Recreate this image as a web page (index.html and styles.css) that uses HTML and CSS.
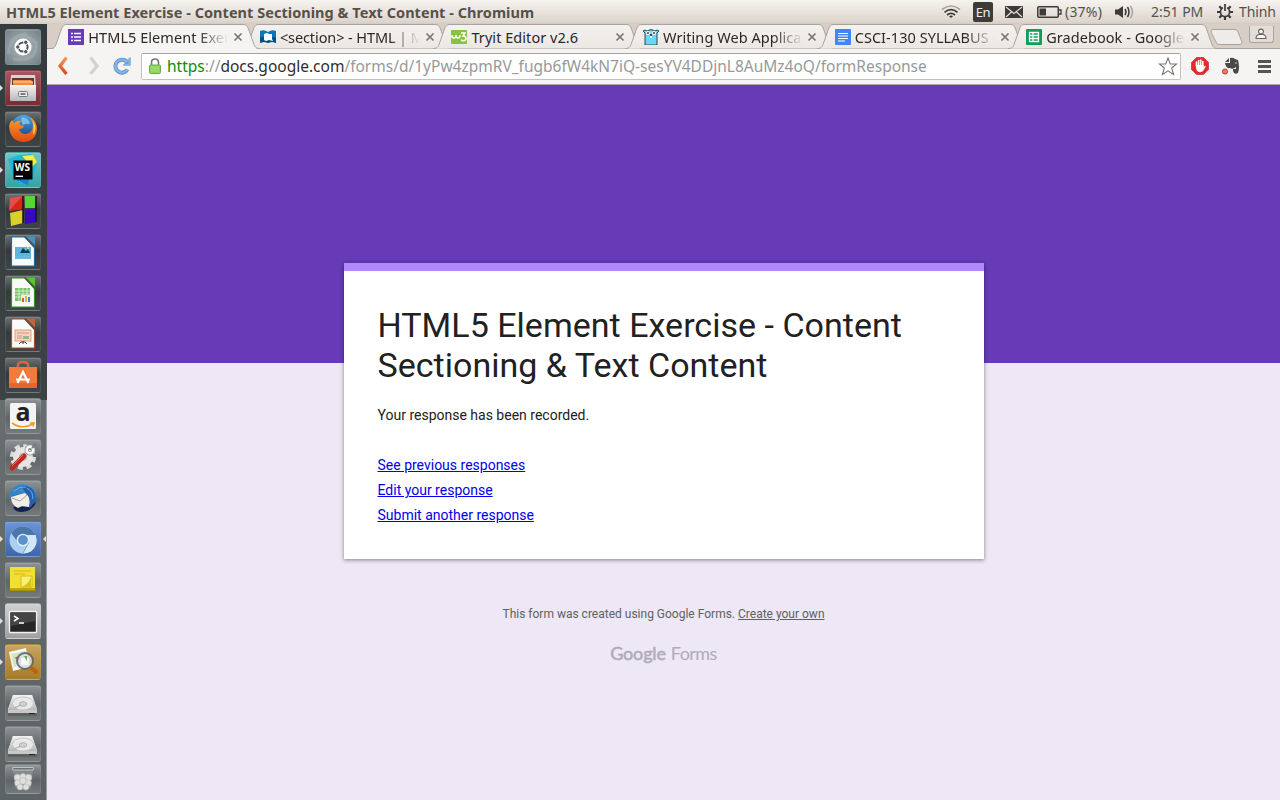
FILE: index.html
```html
<!DOCTYPE html>
<html lang="en">
<head>
<meta charset="utf-8">
<title>HTML5 Element Exercise - Content Sectioning &amp; Text Content</title>
<link rel="stylesheet" href="styles.css">
</head>
<body>
<svg class="defs" width="0" height="0">
  <defs>
    <linearGradient id="orange" x1="0" y1="0" x2="0" y2="1"><stop offset="0" stop-color="#f09a5c"/><stop offset="1" stop-color="#d9481f"/></linearGradient>
    <linearGradient id="fox" x1="0" y1="0" x2="0" y2="1"><stop offset="0" stop-color="#f9a02c"/><stop offset="1" stop-color="#dc4a14"/></linearGradient>
    <linearGradient id="steel" x1="0" y1="0" x2="0" y2="1"><stop offset="0" stop-color="#f4f4f4"/><stop offset="1" stop-color="#b8b8b8"/></linearGradient>
    <linearGradient id="sky" x1="0" y1="0" x2="0" y2="1"><stop offset="0" stop-color="#4fa6df"/><stop offset="1" stop-color="#123a80"/></linearGradient>
    <linearGradient id="tabFill" x1="0" y1="0" x2="0" y2="1"><stop offset="0" stop-color="#f4f2f0"/><stop offset="1" stop-color="#ebe7e3"/></linearGradient>
    <symbol id="tab" viewBox="0 0 212 25"><path d="M0 24.500C4 24.500 5 23 6 20.500L11.500 5C13 1.500 14 .5 17 .5H193C196 .5 197 1.500 198.500 5L204 20.500C205 23 206 24.500 210 24.500"/></symbol>
    <symbol id="close" viewBox="0 0 10 10"><path d="M1.500 1.500L8.500 8.500M8.500 1.500L1.500 8.500" stroke="#77716b" stroke-width="1.600"/></symbol>
    <symbol id="disk" viewBox="0 0 36 36"><path d="M8 10H27L32 24V30H3V24Z" fill="#dcdcdc"/><path d="M8 10H27L32 25H3Z" fill="url(#steel)"/><path d="M3 25H32V31H3Z" fill="#606060"/><path d="M3 25H32V28H3Z" fill="#c8c8c8"/><path d="M24 28.500H30" stroke="#222"/><ellipse cx="18" cy="18.500" rx="10.500" ry="6.500" fill="#e9e9e9" stroke="#c0c0c0" stroke-width=".8"/><ellipse cx="18" cy="19" rx="3.800" ry="2.300" fill="#d0d0d0" stroke="#a5a5a5" stroke-width=".7"/><path d="M9 23L16 20" stroke="#b0b0b0" stroke-width="1.200"/></symbol>
  </defs>
</svg>

<header class="panel">
  <div class="window-title">HTML5 Element Exercise - Content Sectioning &amp; Text Content - Chromium</div>
  <div class="indicators">
    <svg class="wifi" width="20" height="14" viewBox="0 0 20 14" fill="none" stroke-width="1.700"><path d="M1 4.500Q10-2.500 19 4.500" stroke="#aaa49c"/><path d="M3.500 7.300Q10 2 16.500 7.300M6 10Q10 6.600 14 10" stroke="#3c3b37"/><path d="M8 11.200Q10 9.800 12 11.200L10 13Z" fill="#3c3b37"/></svg>
    <span class="lang">En</span>
    <svg class="mail" width="18" height="12" viewBox="0 0 18 12"><rect width="18" height="12" fill="#3c3b37"/><path d="M1 1L9 7.500L17 1M1 11L6.500 6M17 11L11.500 6" fill="none" stroke="#e6e0da" stroke-width="1.100"/></svg>
    <svg class="battery" width="25" height="12" viewBox="0 0 25 12"><rect x=".8" y=".8" width="20.500" height="10.400" rx="1" fill="none" stroke="#3c3b37" stroke-width="1.500"/><path d="M2.500 2.500H9V9.500H2.500Z" fill="#3c3b37"/><path d="M22 4H24V8H22" fill="none" stroke="#3c3b37" stroke-width="1.300"/></svg>
    <span class="percent">(37%)</span>
    <svg class="sound" width="20" height="14" viewBox="0 0 20 14"><path d="M0 4.500H3L8 1V13L3 9.500H0Z" fill="#3c3b37"/><path d="M10 4Q12 7 10 10M12.500 2Q15.500 7 12.500 12" fill="none" stroke="#3c3b37" stroke-width="1.500"/><path d="M15.500 1Q19.500 7 15.500 13" fill="none" stroke="#aaa49c" stroke-width="1.500"/></svg>
    <span class="clock">2:51 PM</span>
    <svg class="gear" width="16" height="16" viewBox="0 0 16 16" fill="none" stroke="#3c3b37"><circle cx="8" cy="8" r="4.600" stroke-width="1.700"/><path d="M8 13V16M3 8H0M13 8H16M4.500 4.500L2.300 2.300M11.500 4.500L13.700 2.300M4.500 11.500L2.300 13.700M11.500 11.500L13.700 13.700" stroke-width="2.200"/><path d="M8 0V7" stroke="#e8e2dc" stroke-width="4"/><path d="M8 0V7" stroke-width="1.700"/></svg>
    <span class="user">Thinh</span>
  </div>
</header>

<div class="desktop">
  <nav class="launcher">
    <div class="tile dash"><svg viewBox="0 0 36 36"><path d="M3 25Q6 5 22 5M8 30Q34 34 31 12M5 14Q15 0 30 13" stroke="#a8b3b7" stroke-width="3" opacity=".45" fill="none"/><circle cx="18" cy="18" r="8.500" fill="#fff"/><circle cx="18" cy="18" r="4.600" fill="none" stroke="#4d5659" stroke-width="2"/><g fill="#4d5659" stroke="#fff"><circle cx="12.800" cy="18" r="2.200"/><circle cx="20.800" cy="13.300" r="2.200"/><circle cx="20.800" cy="22.700" r="2.200"/></g></svg></div>
    <div class="tile files running"><svg viewBox="0 0 36 36"><path d="M6 5H30L31 18H5Z" fill="#d8d5d1"/><path d="M7 8H29V16H7Z" fill="#5c3928"/><path d="M8 10H26L28 12V16H8Z" fill="#f08a43"/><path d="M8 12H28" stroke="#ffd0a5"/><rect x="5" y="15" width="26" height="16" rx="1" fill="url(#steel)"/><rect x="13.500" y="21.500" width="9" height="5" rx="1" fill="#eee" stroke="#777"/><path d="M15.500 24H20.500" stroke="#555" stroke-width="1.500"/></svg></div>
    <div class="tile dark"><svg viewBox="0 0 36 36"><circle cx="18.500" cy="16.500" r="12.500" fill="url(#sky)"/><path d="M17 6Q24 7 25 13Q21 12 18 14Q15 9 17 6" fill="#78bde8"/><path d="M4 15Q5 11 7 9L9 12Q12 9 16 10Q14 12 15 14L19 15Q18 18 14 18Q15 23 21 23Q28 22 28 14Q27 9 25 6Q32 10 32 19Q30 31 18 31Q5 30 4 15Z" fill="url(#fox)"/><path d="M28 10Q33 17 28 24Q29 17 28 10" fill="#ffd14d"/></svg></div>
    <div class="tile storm running"><svg viewBox="0 0 36 36"><path d="M3 7L14 3L27 2L32 10L28 28L14 33L8 24Z" fill="#20b7d9"/><path d="M17 4L28 3L32 10L27 15Z" fill="#f2ec48"/><path d="M9 27L24 27L23 33Z" fill="#217fd3"/><rect x="8.500" y="8.500" width="19" height="19" fill="#000"/><text x="9.800" y="18.500" class="ws">WS</text><path d="M10.500 24.300H18" stroke="#fff" stroke-width="1.400"/></svg></div>
    <div class="tile dark"><svg viewBox="0 0 36 36"><path d="M5 5L18 3V16L4 18Z" fill="#dd241b"/><path d="M20 3H31L30 15H20Z" fill="#5ad33a"/><path d="M5 20L18 17V30L6 33Z" fill="#d7d128"/><path d="M20 17L31 16V29L20 31Z" fill="#3808c1"/><path d="M5 5L18 3L10 11L4 18Z" fill="#fff" opacity=".2"/><path d="M18 3V30M31 3V29" stroke="#151515" stroke-width="1.500"/></svg></div>
    <div class="tile dark"><svg viewBox="0 0 36 36"><path d="M6.500 3H20L29.500 13V32H6.500Z" fill="#fafafa" stroke="#1d6da2" stroke-width="1.200"/><path d="M20 2.500H30V13Z" fill="#4392c6"/><path d="M18.500 2.500H21L30 11.500V15Z" fill="#3f5561"/><rect x="10" y="13" width="16" height="12" fill="#5bb5df"/><path d="M15 19L18 14L21 17L23 15L25 19Z" fill="#123d4a"/><circle cx="23" cy="14" r="1" fill="#ffe050"/><path d="M10 22H26V25H10Z" fill="#6fb6dc"/></svg></div>
    <div class="tile dark"><svg viewBox="0 0 36 36"><path d="M6.500 3H20L29.500 13V32H6.500Z" fill="#fafafa" stroke="#32941d" stroke-width="1.200"/><path d="M20 2.500H30V13Z" fill="#57c434"/><path d="M18.500 2.500H21L30 11.500V15Z" fill="#42603a"/><path d="M10 13H25V26H10Z" fill="#79c468"/><path d="M10 16H25M10 19H25M10 22H25M14 13V26M18 13V26M22 13V26" stroke="#e5f7df" stroke-width=".8"/><path d="M16 20H26V27H16Z" fill="#eee"/><path d="M18 23V27" stroke="#d85b36" stroke-width="2"/><path d="M21 21V27" stroke="#e9b637" stroke-width="2"/><path d="M24 22V27" stroke="#398ac4" stroke-width="2"/></svg></div>
    <div class="tile dark"><svg viewBox="0 0 36 36"><path d="M6.500 3H20L29.500 13V32H6.500Z" fill="#fafafa" stroke="#a14e25" stroke-width="1.200"/><path d="M20 2.500H30V13Z" fill="#b9673d"/><path d="M18.500 2.500H21L30 11.500V15Z" fill="#604a40"/><rect x="10" y="14" width="16" height="11" fill="#f5d4c5" stroke="#dba083"/><path d="M12 17H24M12 20H17M12 22H17" stroke="#dc926e"/><path d="M18 20H24V23H18Z" fill="#8cba90"/><path d="M18 25V28M14 28L16 26H20L22 28" stroke="#4b3b35" fill="none"/></svg></div>
    <div class="tile dark"><svg viewBox="0 0 36 36"><path d="M13 12V8Q13 5 18 5Q23 5 23 8V12" fill="none" stroke="#cf654a" stroke-width="2.600"/><path d="M4 10H32V31H4Z" fill="#f17a3d"/><path d="M4 26H32V31H4Z" fill="#e4662c"/><path d="M12.500 26L18 15L23.500 26M11 22.500H25" fill="none" stroke="#fff" stroke-width="2.200"/></svg></div>
    <div class="tile pale"><svg viewBox="0 0 36 36"><rect x="5" y="5" width="26" height="26" rx="1.500" fill="#f4f4f4"/><text x="10.500" y="23" class="amazon">a</text><path d="M7 25Q17 32 28 26M25 25H29L28 28.500" fill="none" stroke="#f79a1c" stroke-width="1.600"/></svg></div>
    <div class="tile pale"><svg viewBox="0 0 36 36"><circle cx="18" cy="18" r="11" fill="none" stroke="#dcdcdc" stroke-width="4" stroke-dasharray="5 3.640"/><circle cx="18" cy="18" r="10" fill="#e5e5e5"/><circle cx="18" cy="18" r="4" fill="#bcbcbc"/><path d="M15 20L23 13" stroke="#cfcfcf" stroke-width="4"/><circle cx="25" cy="11" r="3.400" fill="none" stroke="#8c8c8c" stroke-width="4"/><circle cx="25" cy="11" r="3.400" fill="none" stroke="#f8f8f8" stroke-width="2.600"/><path d="M27 9L31 5" stroke="#777d7e" stroke-width="2"/><path d="M7 29L19 17" stroke="#bf2920" stroke-width="5" stroke-linecap="round"/><path d="M7 27L18 16" stroke="#ef6f61"/></svg></div>
    <div class="tile pale"><svg viewBox="0 0 36 36"><circle cx="19" cy="17.500" r="13" fill="url(#sky)"/><path d="M8 27Q11 34 22 31Q28 29 31 22L24 27Z" fill="#16204a"/><path d="M6 17L20 13Q27 18 24 27L17 26L13 28Q6 25 6 17Z" fill="#f0ece6"/><path d="M7 18L15 21L22 15" fill="none" stroke="#aaa395"/><path d="M4 20Q4 9 13 5Q22 2 27 10Q18 7 12 12L7 15Z" fill="#3585cc"/><path d="M17 6Q30 5 30 17Q29 26 24 28Q27 16 19 11Z" fill="#285fa9"/><path d="M9 11Q14 6 21 7M22 8Q28 11 28 19" stroke="#68b0e3" fill="none"/></svg></div>
    <div class="tile chromium running focused"><svg viewBox="0 0 36 36"><circle cx="18" cy="19" r="13.500" fill="#a9d0ee"/><path d="M6.300 12.300A13.500 13.500 0 0 1 29.700 12.300L31 14H18L12 20Z" fill="#4a76aa"/><path d="M30.500 14Q34 24 26 30.500Q21 33 17 32L24 20Q24 15 20 14Z" fill="#d2e8f7"/><path d="M18 32L24 21" stroke="#679bc9"/><circle cx="18" cy="19" r="6.300" fill="#e6f2fa"/><circle cx="18" cy="19" r="4.900" fill="#5c91cc"/></svg></div>
    <div class="tile pale"><svg viewBox="0 0 36 36"><path d="M5 5H30V29H5Z" fill="#f4df30"/><path d="M5 26H30V29H5Z" fill="#bda90f"/><path d="M5 28.500H30V30H5Z" fill="#87790b"/><path d="M9 9H26M9 12H20" stroke="#cdb927"/><path d="M16 14H27V25H16Z" fill="#f9ef78" stroke="#d5bd12"/><path d="M16 25Q23 23 26 15V25Z" fill="#dbc218"/></svg></div>
    <div class="tile terminal running"><svg viewBox="0 0 36 36"><rect x="4.500" y="8.500" width="27" height="21" rx="1" fill="#262626" stroke="#f2f2f2" stroke-width="1.400"/><path d="M6 10H30V18L6 23Z" fill="#454545"/><path d="M9 13L13 15.500L9 18M14 20H19" fill="none" stroke="#fff" stroke-width="1.500"/></svg></div>
    <div class="tile viewer running"><svg viewBox="0 0 36 36"><path d="M4 8L21 4L24 23L8 27Z" fill="#f7f7f2"/><path d="M6 10L20 7L21 20L9 23Z" fill="#d5e2c9"/><path d="M9 14L14 12L17 17Z" fill="#cb6c3c"/><circle cx="20" cy="17" r="8" fill="#d6e1e4" opacity=".9" stroke="#60666b" stroke-width="2"/><path d="M16 14H24V21H16Z" fill="#f8f8f8"/><path d="M19 12H22V17Z" fill="#6ea754"/><path d="M26.500 24L31 28" stroke="#b9640d" stroke-width="4" stroke-linecap="round"/></svg></div>
    <div class="tile pale"><svg viewBox="0 0 36 36"><use href="#disk"/></svg></div>
    <div class="tile pale"><svg viewBox="0 0 36 36"><use href="#disk"/></svg></div>
    <div class="tile pale trash"><svg viewBox="0 0 36 30"><path d="M8 4H28L26 24Q18 28 10 24Z" fill="#8b9091" opacity=".7"/><path d="M7.500 3.500H28.500L28 6H8Z" fill="#6c7273" stroke="#bfc3c3"/><g fill="#dfe0dd" stroke="#b4b7b4" stroke-width=".6"><circle cx="12.500" cy="13.500" r="3.300"/><circle cx="18" cy="12.500" r="3"/><circle cx="23.500" cy="13.500" r="3.300"/><circle cx="13" cy="19" r="3.300"/><circle cx="23" cy="19" r="3.300"/><circle cx="18" cy="17" r="3.300"/><circle cx="15" cy="23" r="3"/><circle cx="21" cy="23" r="3"/></g></svg></div>
  </nav>

  <main class="browser">
    <div class="tab-strip">
      <div class="tab active"><svg class="tab-shape" width="212" height="25"><use href="#tab"/></svg><svg class="favicon" viewBox="0 0 16 16"><path d="M0 0H16V16H0Z" fill="#673ab7"/><path d="M3 4.500H5M6 4.500H13M3 8H5M6 8H13M3 11.500H5M6 11.500H13" stroke="#fff" stroke-width="1.600"/></svg><span class="tab-title">HTML5 Element Exer</span><svg class="close"><use href="#close"/></svg></div>
      <div class="tab"><svg class="tab-shape" width="212" height="25"><use href="#tab"/></svg><svg class="favicon" viewBox="0 0 16 16"><path d="M0 2Q4 0 8 3Q12 0 16 2V14Q12 12 8 14Q4 12 0 14Z" fill="#0878bd"/><path d="M0 8H16V14Q12 12 8 14Q4 12 0 14Z" fill="#075087"/><path d="M4 5L7 4L9 5L12 5V10L13 12L9 11L6 12L4 11Z" fill="#fff"/></svg><span class="tab-title t2">&lt;section&gt; - HTML | M</span><svg class="close"><use href="#close"/></svg></div>
      <div class="tab"><svg class="tab-shape" width="212" height="25"><use href="#tab"/></svg><svg class="favicon" viewBox="0 0 16 16"><rect y="1" width="16" height="14" rx="1" fill="#85c440"/><path d="M1 6V7Q1 9 3 9Q5 9 5 6Q5 9 7 9Q9 9 9 6M10 4H14L12 7Q15 7 15 10Q14 13 10 11" fill="none" stroke="#fff" stroke-width="1.500"/></svg><span class="tab-title t3">Tryit Editor v2.6</span><svg class="close"><use href="#close"/></svg></div>
      <div class="tab"><svg class="tab-shape" width="212" height="25"><use href="#tab"/></svg><svg class="favicon" viewBox="0 0 16 16"><path d="M2 16V4L0 2L2 1L4 2Q8-1 12 2L14 1L16 2L14 4V16Z" fill="#6ad7f5" stroke="#264b57"/><circle cx="5" cy="4" r="2" fill="#fff"/><circle cx="11" cy="4" r="2" fill="#fff"/><path d="M5 3V5M11 3V5M7 6H9" stroke="#222" stroke-width="1.300"/><path d="M7 7H9V9H7Z" fill="#fff"/></svg><span class="tab-title">Writing Web Applica</span><svg class="close"><use href="#close"/></svg></div>
      <div class="tab"><svg class="tab-shape" width="212" height="25"><use href="#tab"/></svg><svg class="favicon" viewBox="0 0 16 16"><rect width="16" height="16" rx="1" fill="#4285f4"/><path d="M3 4.500H13M3 7H13M3 9.500H13M3 12H10" stroke="#fff" stroke-width="1.100"/></svg><span class="tab-title">CSCI-130 SYLLABUS -</span><svg class="close"><use href="#close"/></svg></div>
      <div class="tab"><svg class="tab-shape" width="212" height="25"><use href="#tab"/></svg><svg class="favicon" viewBox="0 0 16 16"><rect width="16" height="16" rx="1" fill="#0f9d58"/><path d="M3.500 3.500H12.500V12.500H3.500ZM3.500 6.500H12.500M3.500 9.500H12.500M7 3.500V12.500" fill="none" stroke="#fff" stroke-width="1.300"/></svg><span class="tab-title">Gradebook - Google</span><svg class="close"><use href="#close"/></svg></div>
      <svg class="new-tab" width="33" height="17" viewBox="0 0 33 17"><path d="M3 .5H25Q27 .5 28 3L32 13Q32 15.500 30 15.500H9Q7 15.500 6 13L1 3Q1 .5 3 .5Z" fill="#efebe8" stroke="#aaa39d"/></svg>
      <div class="profile"><svg width="12" height="12" viewBox="0 0 12 12" fill="#f6f3f0" stroke="#67625d" stroke-width="1.100"><circle cx="6" cy="3.500" r="2.400"/><path d="M1 10.500Q1 7 4 6.500H8Q11 7 11 10.500Z"/></svg></div>
    </div>

    <div class="toolbar">
      <svg class="back" width="12" height="20" viewBox="0 0 12 20"><path d="M9.500 1.500L3 10L9.500 18" fill="none" stroke="url(#orange)" stroke-width="3.300"/></svg>
      <svg class="forward" width="12" height="20" viewBox="0 0 12 20"><path d="M2.500 1.500L9 10L2.500 18" fill="none" stroke="#d4d1ce" stroke-width="3.300"/></svg>
      <svg class="reload" width="18" height="18" viewBox="0 0 18 18"><path d="M14.500 12.500A6.500 6.500 0 1 1 13.500 4.500" fill="none" stroke="#5b93cd" stroke-width="4"/><path d="M17.500 .5V8.500H9.500Z" fill="#5b93cd"/><path d="M14.300 12.700A6.500 6.500 0 1 1 13.500 4.500L16.500 2V7.500H11.500" fill="none" stroke="#86b5e5" stroke-width="2.200"/></svg>
      <div class="omnibox">
        <svg class="lock" width="12" height="16" viewBox="0 0 12 16"><path d="M2.500 8V4.500Q2.500 1 6 1Q9.500 1 9.500 4.500V8" fill="none" stroke="#777" stroke-width="1.600"/><rect x=".5" y="7" width="11" height="8.500" rx="1" fill="#8bd35b" stroke="#6fae50"/><path d="M2 9H10M2 11H10M2 13H10" stroke="#b3e98e" stroke-width=".7"/></svg>
        <span class="url"><span class="secure">https</span>://<span class="host">docs.google.com</span>/forms/d/1yPw4zpmRV_fugb6fW4kN7iQ-sesYV4DDjnL8AuMz4oQ/formResponse</span>
        <svg class="star" width="20" height="19" viewBox="0 0 20 19"><path d="M10 1L12.300 7H18.500L13.700 11L15.500 17.500L10 13.800L4.500 17.500L6.300 11L1.500 7H7.700Z" fill="#fff" stroke="#7b7773" stroke-width="1.100"/></svg>
      </div>
      <svg class="adblock" width="18" height="18" viewBox="0 0 18 18"><path d="M5.500 .5H12.500L17.500 5.500V12.500L12.500 17.500H5.500L.5 12.500V5.500Z" fill="#e8282c" stroke="#d8494b"/><path d="M5.500 9V5M7.600 9V3.500M9.700 9V3M11.800 9V4.500" stroke="#fff" stroke-width="1.600" stroke-linecap="round"/><path d="M4.700 8H12.600V10L14 8.800Q15 8.500 14.500 10L12 14Q8 17 5.500 13Z" fill="#fff"/></svg>
      <svg class="evernote" width="18" height="18" viewBox="0 0 18 18"><path d="M3 5L7 1V5ZM8 1Q11 0 13 2L16 3Q18 10 16 16Q12 18 11 14V12H14V10Q11 13 8 11Q4 12 3 6H8Z" fill="#494949"/><path d="M13 6H15" stroke="#ccc"/><circle cx="3" cy="14.500" r="2.600" fill="#f47960" stroke="#b24335"/></svg>
      <svg class="menu" width="13" height="13" viewBox="0 0 13 13"><path d="M0 1.500H13M0 6.500H13M0 11.500H13" stroke="#555" stroke-width="3"/></svg>
    </div>

    <div class="page">
      <section class="card">
        <h1>HTML5 Element Exercise - Content Sectioning &amp; Text Content</h1>
        <p>Your response has been recorded.</p>
        <div class="links"><a href="#">See previous responses</a><a href="#">Edit your response</a><a href="#">Submit another response</a></div>
      </section>
      <footer>
        <p>This form was created using Google Forms. <a href="#">Create your own</a></p>
        <div class="logo"><span class="google">Google</span><span class="forms">Forms</span></div>
      </footer>
    </div>
  </main>
</div>
</body>
</html>
```
FILE: styles.css
```css
* { box-sizing: border-box; }
body { margin: 0; width: 1280px; height: 800px; overflow: hidden; font-family: "Noto Sans", sans-serif; }
.defs { position: absolute; }
svg { flex: none; display: block; }

.panel { height: 24px; display: flex; justify-content: space-between; align-items: center; padding: 0 5px 0 6px; background: linear-gradient(#f6f3f0, #ddd5cd 92%, #d2c9c1); color: #56514b; font-size: 14px; white-space: nowrap; }
.window-title { font-size: 14.500px; font-weight: 700; line-height: 24px; letter-spacing: .04px; }
.indicators { display: flex; align-items: center; line-height: 24px; }
.lang { width: 20px; height: 20px; margin: 0 12px; border-radius: 2px; background: #3c3b37; color: #eee; font-size: 13px; line-height: 20px; text-align: center; letter-spacing: -.3px; }
.battery { margin: 0 3px 0 14px; }
.percent { width: 38px; letter-spacing: .2px; }
.sound { margin: 0 16px 0 12px; }
.clock { width: 53px; letter-spacing: -.05px; }
.gear { margin: 0 6px 0 13px; }
.user { width: 36px; letter-spacing: -.1px; }

.desktop { display: flex; height: 776px; }
.launcher { width: 47px; flex: none; padding: 5px 0 0 5px; display: flex; flex-direction: column; gap: 5px; background: linear-gradient(90deg, transparent 46px, #9a9d9e 46px) 0 376px no-repeat, linear-gradient(#353a3c, #3d4244 376px, #686e70 376px, #5c6365); }
.tile { position: relative; flex: none; width: 36px; height: 36px; border-radius: 3px; border: 1px solid rgba(190, 200, 202, .13); box-shadow: inset 0 1px 1px rgba(255, 255, 255, .15); }
.tile > svg { width: 36px; height: 36px; margin: -1px; }
.dark { background: linear-gradient(#6b7071, #35393b 45%, #3f4446); }
.pale { background: linear-gradient(#8d9394, #606668 55%, #747a7b); }
.dash { background: radial-gradient(#b0b9bc, #718087); }
.files { background: linear-gradient(#a85660, #762b35); }
.storm { background: linear-gradient(#75c4c4, #35a2a3); }
.chromium { background: linear-gradient(#6b95d3, #3e65ab); }
.terminal { background: linear-gradient(#d0d0d0, #9f9f9f); }
.viewer { background: linear-gradient(#c7a560, #a47b27); }
.trash { height: 30px; margin-top: -3px; }
.trash > svg { height: 30px; }
.running::before { content: ""; position: absolute; left: -6px; top: 14px; border: 3.500px solid transparent; border-left-color: #dedede; border-right: 0; }
.focused::after { content: ""; position: absolute; right: -6px; top: 14px; border: 3.500px solid transparent; border-right-color: #dedede; border-left: 0; }
.ws { font: 700 10px "Open Sans", sans-serif; fill: #fff; }
.amazon { font: 700 25px "Open Sans", sans-serif; fill: #222; }

.browser { flex: 1; min-width: 0; display: flex; flex-direction: column; }
.tab-strip { height: 25px; flex: none; display: flex; padding-left: 3.300px; background: linear-gradient(transparent 24px, #a8a39e 24px), #d8cec5; }
.tab { position: relative; flex: none; width: 191.600px; height: 25px; display: flex; align-items: center; padding: 1px 0 0 18px; }
.tab-shape { position: absolute; left: 0; top: 0; overflow: visible; fill: url(#tabFill); stroke: #a8a39e; }
.tab.active { z-index: 2; }
.active .tab-shape { fill: #f5f4f2; }
.active::after { content: ""; position: absolute; left: 4px; top: 24px; width: 202px; height: 1px; background: #f5f4f2; }
.favicon { position: relative; width: 16px; height: 16px; }
.tab-title { position: relative; width: 141px; margin-left: 4px; white-space: nowrap; font-size: 14.500px; line-height: 22px; color: #2e2723; letter-spacing: .05px; -webkit-mask-image: linear-gradient(90deg, #000 110px, transparent 140px); mask-image: linear-gradient(90deg, #000 110px, transparent 140px); }
.t2 { letter-spacing: -.1px; }
.t3 { -webkit-mask-image: none; mask-image: none; }
.close { position: relative; width: 10px; height: 10px; margin-left: 4px; }
.new-tab { margin: 5px 0 0 10px; }
.profile { width: 25px; height: 17px; margin: 2px 0 0 6px; display: flex; justify-content: center; align-items: center; border: 1px solid #aaa39d; border-top: 0; border-radius: 0 0 3px 3px; background: #e4dcd6; }
.toolbar { height: 36px; flex: none; display: flex; align-items: center; padding: 0 9px 1px 10px; background: #f5f4f2; border-bottom: 1px solid #aaa6a1; }
.forward { margin-left: 19px; }
.reload { margin-left: 13px; }
.omnibox { width: 1040px; height: 27px; margin-left: 10px; display: flex; align-items: center; background: #fff; border: 1px solid #c5c1bd; border-top-color: #a6a29e; border-radius: 2px; padding: 0 2px 0 7px; }
.url { flex: 1; margin-left: 6px; font-size: 15.500px; line-height: 25px; white-space: nowrap; color: #999; }
.secure { color: #0a8f08; }
.host { color: #2e2e2e; }
.adblock { margin-left: 10px; }
.evernote { margin-left: 13px; }
.menu { margin-left: 18px; }

.page { flex: 1; padding-top: 178px; background: linear-gradient(#673ab7 278px, #ede7f6 278px); font-family: Roboto, sans-serif; }
.card { width: 640px; height: 296px; margin-left: 297px; padding: 34px 33.500px 0; background: #fff; border-top: 8px solid #b388ff; box-shadow: 0 1px 4px rgba(0, 0, 0, .45); color: #212121; }
h1 { margin: 0; font-size: 34px; font-weight: 400; line-height: 40px; letter-spacing: .02px; }
.card p { margin: 20px 0 0; font-size: 14px; line-height: 20px; }
.links { margin-top: 28px; display: flex; flex-direction: column; align-items: flex-start; font-size: 14px; line-height: 25px; }
.links a { color: #0000ee; }
footer { width: 639px; margin: 46px 0 0 297px; display: flex; flex-direction: column; align-items: center; color: #616161; font-size: 12px; line-height: 18px; }
footer p { margin: 0; }
footer a { color: inherit; }
.logo { display: flex; gap: 5px; margin-top: 17px; font: 18px/26px Lato, sans-serif; color: #b0abba; letter-spacing: -.55px; }
.google { -webkit-text-stroke: .5px #b0abba; letter-spacing: -.15px; }
```
